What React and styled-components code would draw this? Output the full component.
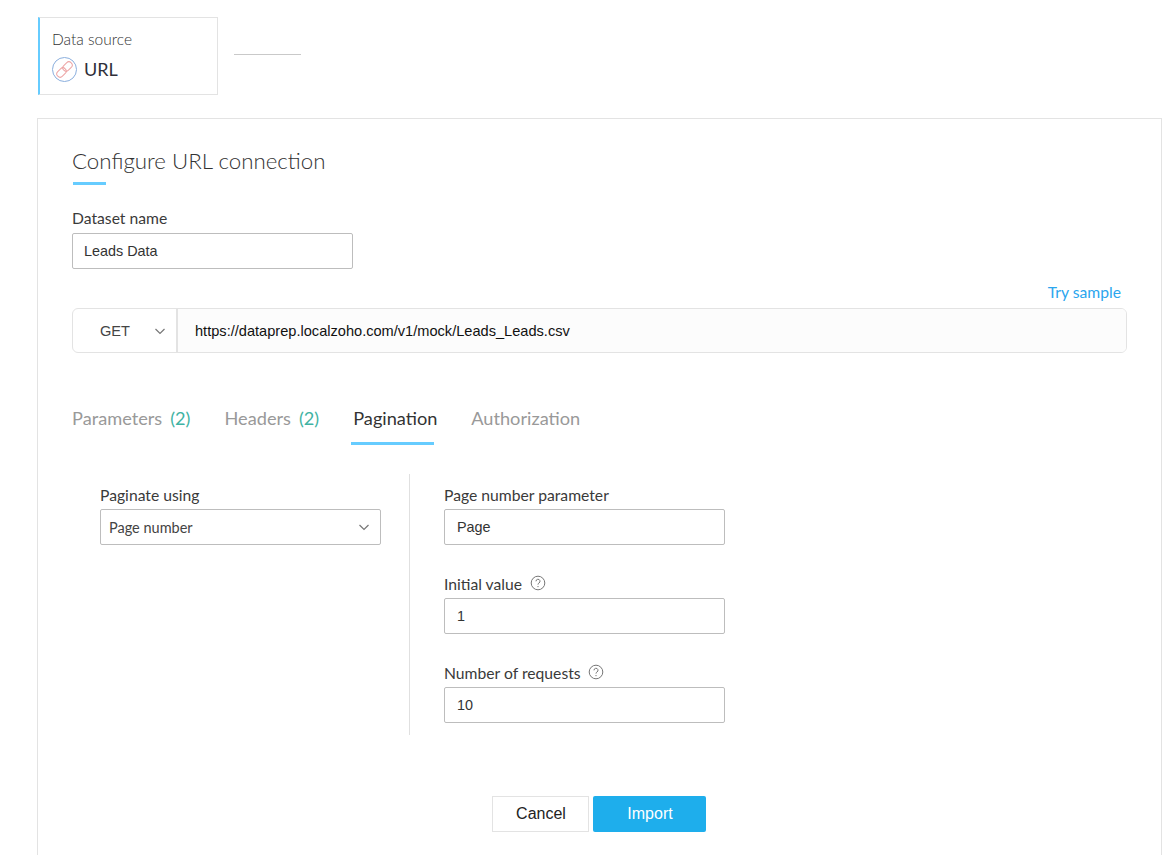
import React from 'react';
import styled, { createGlobalStyle } from 'styled-components';

const GlobalStyle = createGlobalStyle`
  html, body {
    margin: 0;
    padding: 0;
    height: 100%;
    overflow: hidden;
    background: #fff;
  }
  * { box-sizing: border-box; }
  body {
    font-family: Lato, "Liberation Sans", sans-serif;
    color: #333;
  }
`;

const Page = styled.div`
  height: 855px;
  overflow: hidden;
  padding: 17px 12px 0 37px;
`;

const StepRow = styled.div`
  display: flex;
  align-items: flex-start;
  gap: 16px;
  margin-left: 1px;
`;

const StepCard = styled.div`
  width: 180px;
  height: 78px;
  border: 1px solid #e3e3e3;
  border-left: 2px solid #66ccff;
  padding: 13px 0 0 12px;
`;

const StepLabel = styled.div`
  font-size: 15.5px;
  line-height: 16px;
  font-weight: 300;
  color: #333;
`;

const StepValue = styled.div`
  display: flex;
  align-items: center;
  gap: 7px;
  margin-top: 9px;
  font-size: 18px;
  line-height: 26px;
  color: #2f2f3a;
`;

const StepLine = styled.div`
  width: 67px;
  height: 1px;
  margin-top: 37px;
  background: #c9c9c9;
`;

const Panel = styled.div`
  margin-top: 23px;
  height: 760px;
  border: 1px solid #e3e3e3;
  padding: 27px 34px 0 34px;
`;

const Title = styled.h1`
  margin: 0;
  font-size: 22.3px;
  line-height: 30px;
  font-weight: 300;
  color: #333;
`;

const TitleBar = styled.div`
  width: 33px;
  height: 3px;
  margin: 6px 0 0 1px;
  background: #66ccff;
`;

const Label = styled.label`
  display: flex;
  align-items: center;
  gap: 7.5px;
  font-size: 15.7px;
  line-height: 16px;
  color: #3a3a3a;
  margin-bottom: ${props => props.$gap}px;
`;

const NameField = styled.div`
  margin-top: 25px;
`;

const TextBox = styled.div`
  display: flex;
  align-items: center;
  width: 281px;
  height: 36px;
  padding-left: ${props => props.$pad || 12}px;
  border: 1px solid #bdbdbd;
  border-radius: 2px;
  font-family: "Liberation Sans", Arial, sans-serif;
  font-size: 14.4px;
  color: #333;
`;

const SampleLink = styled.a`
  display: block;
  margin-top: 15px;
  padding-right: 6px;
  text-align: right;
  font-size: 15.7px;
  line-height: 16px;
  color: #2ba6ee;
`;

const UrlRow = styled.div`
  display: flex;
  width: 1055px;
  height: 45px;
  margin-top: 8px;
  border: 1px solid #e3e3e3;
  border-radius: 6px;
  overflow: hidden;
  font-family: "Liberation Sans", Arial, sans-serif;
  font-size: 14.6px;
`;

const MethodBox = styled.div`
  display: flex;
  align-items: center;
  justify-content: space-between;
  width: 105px;
  padding: 0 10px 0 27px;
  border-right: 2px solid #e3e3e3;
  color: #444;
`;

const UrlText = styled.div`
  flex: 1;
  display: flex;
  align-items: center;
  padding-left: 17px;
  background: #fcfcfc;
  color: #111;
`;

const Tabs = styled.div`
  display: flex;
  gap: 34px;
  margin-top: 51px;
`;

const Tab = styled.div`
  height: 41px;
  margin: ${props => props.$active ? '0 3px 0 -2px' : '0'};
  padding-left: ${props => props.$active ? '2px' : '0'};
  width: ${props => props.$active ? '83px' : 'auto'};
  font-size: 18.2px;
  line-height: 28px;
  white-space: nowrap;
  border-bottom: 3px solid ${props => props.$active ? '#66ccff' : 'transparent'};
  color: ${props => props.$active ? '#333' : '#999'};
`;

const Count = styled.span`
  color: #3fb3a3;
  margin-left: 8px;
`;

const Body = styled.div`
  display: flex;
  margin: 29px 0 0 28px;
`;

const LeftCol = styled.div`
  width: 310px;
  height: 261px;
  padding-top: 13px;
  border-right: 1px solid #e0e0e0;
`;

const RightCol = styled.div`
  padding: 13px 0 0 34px;
`;

const SelectBox = styled.div`
  display: flex;
  align-items: center;
  justify-content: space-between;
  width: 281px;
  height: 36px;
  padding: 0 10px 0 8px;
  border: 1px solid #bdbdbd;
  border-radius: 2px;
  font-size: 14.5px;
  color: #444;
`;

const FormRow = styled.div`
  margin-bottom: 31px;

  &:last-child {
    margin-bottom: 0;
  }
`;

const Actions = styled.div`
  display: flex;
  justify-content: center;
  gap: 4px;
  width: 1053px;
  margin-top: 61px;
  font-family: "Liberation Sans", Arial, sans-serif;
`;

const Button = styled.button`
  height: 36px;
  width: ${props => props.$primary ? 113 : 97}px;
  padding: 0 0 0 2px;
  border: ${props => props.$primary ? 'none' : '1px solid #e3e3e3'};
  border-radius: ${props => props.$primary ? 2 : 0}px;
  background: ${props => props.$primary ? '#1eaeec' : '#fff'};
  color: ${props => props.$primary ? '#fff' : '#222'};
  font-family: inherit;
  font-size: 16px;
`;

const HelpSvg = styled.svg`
  margin-top: -2px;
`;

const Chevron = () => (
  <svg width="12" height="12" viewBox="0 0 12 12" fill="none" stroke="#777" strokeWidth="1.2">
    <path d="M1.5 4l4.5 4.5L10.5 4" />
  </svg>
);

const HelpIcon = () => (
  <HelpSvg width="16" height="16" viewBox="0 0 16 16" fill="none">
    <circle cx="8" cy="8" r="6.8" stroke="#777" strokeWidth="1" />
    <path d="M6 6.3a2 2 0 1 1 3 1.7c-.7.4-1 .8-1 1.6" stroke="#777" strokeWidth="1" />
    <circle cx="8" cy="11.6" r=".7" fill="#777" />
  </HelpSvg>
);

const LinkIcon = () => (
  <svg width="25" height="25" viewBox="0 0 25 25" fill="none">
    <circle cx="12.5" cy="12.5" r="12" stroke="#8aaedd" strokeWidth="1" />
    <g stroke="#eda5a5" strokeWidth="1" fill="none" transform="rotate(-45 12.5 12.5)">
      <rect x="3" y="9.2" width="10.5" height="6.6" rx="3.3" />
      <rect x="11.5" y="9.2" width="10.5" height="6.6" rx="3.3" />
    </g>
  </svg>
);

export default function App() {
  return (
    <Page>
      <GlobalStyle />
      <StepRow>
        <StepCard>
          <StepLabel>Data source</StepLabel>
          <StepValue>
            <LinkIcon />
            URL
          </StepValue>
        </StepCard>
        <StepLine />
      </StepRow>

      <Panel>
        <Title>Configure URL connection</Title>
        <TitleBar />

        <NameField>
          <Label $gap={7}>Dataset name</Label>
          <TextBox $pad={11}>Leads Data</TextBox>
        </NameField>

        <SampleLink>Try sample</SampleLink>
        <UrlRow>
          <MethodBox>
            GET
            <Chevron />
          </MethodBox>
          <UrlText>https://dataprep.localzoho.com/v1/mock/Leads_Leads.csv</UrlText>
        </UrlRow>

        <Tabs>
          <Tab>Parameters<Count>(2)</Count></Tab>
          <Tab>Headers<Count>(2)</Count></Tab>
          <Tab $active>Pagination</Tab>
          <Tab>Authorization</Tab>
        </Tabs>

        <Body>
          <LeftCol>
            <Label $gap={6}>Paginate using</Label>
            <SelectBox>
              Page number
              <Chevron />
            </SelectBox>
          </LeftCol>
          <RightCol>
            <FormRow>
              <Label $gap={6}>Page number parameter</Label>
              <TextBox>Page</TextBox>
            </FormRow>
            <FormRow>
              <Label $gap={6}>Initial value <HelpIcon /></Label>
              <TextBox>1</TextBox>
            </FormRow>
            <FormRow>
              <Label $gap={6}>Number of requests <HelpIcon /></Label>
              <TextBox>10</TextBox>
            </FormRow>
          </RightCol>
        </Body>

        <Actions>
          <Button>Cancel</Button>
          <Button $primary>Import</Button>
        </Actions>
      </Panel>
    </Page>
  );
}
